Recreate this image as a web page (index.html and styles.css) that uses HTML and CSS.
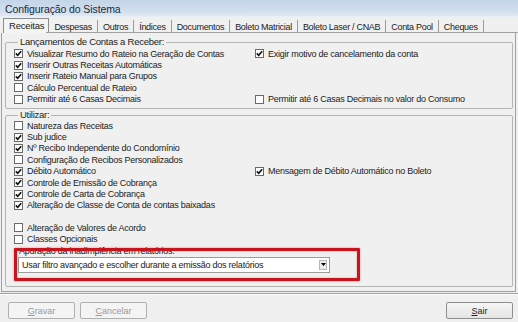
FILE: index.html
```html
<!DOCTYPE html>
<html lang="pt-BR">
<head>
    <meta charset="UTF-8">
    <title>Configuração do Sistema</title>
    <link rel="stylesheet" href="styles.css">
</head>
<body>
    <div class="window">
        <div class="titlebar">Configuração do Sistema</div>

        <div class="tabs">
            <span class="tab active">Receitas</span>
            <span class="tab">Despesas</span>
            <span class="tab">Outros</span>
            <span class="tab">Índices</span>
            <span class="tab">Documentos</span>
            <span class="tab">Boleto Matricial</span>
            <span class="tab">Boleto Laser / CNAB</span>
            <span class="tab">Conta Pool</span>
            <span class="tab">Cheques</span>
            <span class="tab-fill"></span>
        </div>

        <div class="panel">
            <fieldset class="group group-top">
                <legend>Lançamentos de Contas a Receber:</legend>
                <div class="rows">
                    <label class="check on">Visualizar Resumo do Rateio na Geração de Contas</label>
                    <label class="check on">Exigir motivo de cancelamento da conta</label>
                    <label class="check on">Inserir Outras Receitas Automáticas</label>
                    <span></span>
                    <label class="check on">Inserir Rateio Manual para Grupos</label>
                    <span></span>
                    <label class="check">Cálculo Percentual de Rateio</label>
                    <span></span>
                    <label class="check">Permitir até 6 Casas Decimais</label>
                    <label class="check">Permitir até 6 Casas Decimais no valor do Consumo</label>
                </div>
            </fieldset>

            <fieldset class="group group-use">
                <legend>Utilizar:</legend>
                <div class="rows">
                    <label class="check">Natureza das Receitas</label>
                    <span></span>
                    <label class="check on">Sub judice</label>
                    <span></span>
                    <label class="check on">Nº Recibo Independente do Condomínio</label>
                    <span></span>
                    <label class="check">Configuração de Recibos Personalizados</label>
                    <span></span>
                    <label class="check on">Débito Automático</label>
                    <label class="check on">Mensagem de Débito Automático no Boleto</label>
                    <label class="check on">Controle de Emissão de Cobrança</label>
                    <span></span>
                    <label class="check on">Controle de Carta de Cobrança</label>
                    <span></span>
                    <label class="check on">Alteração de Classe de Conta de contas baixadas</label>
                    <span></span>
                </div>
                <div class="rows rows-extra">
                    <label class="check">Alteração de Valores de Acordo</label>
                    <span></span>
                    <label class="check">Classes Opcionais</label>
                    <span></span>
                </div>

                <div class="field">
                    <div class="field-label">Apuração da inadimplência em relatórios:</div>
                    <div class="select">
                        <span class="select-text">Usar filtro avançado e escolher durante a emissão dos relatórios</span>
                        <span class="select-btn">
                            <svg width="5" height="3" viewBox="0 0 5 3"><path d="M0 0h5L2.5 3z" fill="#000"/></svg>
                        </span>
                    </div>
                    <div class="highlight"></div>
                </div>
            </fieldset>
        </div>

        <div class="footer">
            <div class="buttons">
                <button class="btn" disabled><u>G</u>ravar</button>
                <button class="btn" disabled><u>C</u>ancelar</button>
            </div>
            <button class="btn"><u>S</u>air</button>
        </div>
    </div>

    <script>
        // draw the tick inside every checked box
        document.querySelectorAll('.check').forEach(function (label) {
            const box = document.createElement('span');
            box.className = 'box';
            if (label.classList.contains('on')) {
                box.innerHTML = '<svg width="7" height="7" viewBox="0 0 7 7"><path d="M0.8 3.4 L2.7 5.3 L6.2 1.2" fill="none" stroke="#111" stroke-width="1.6"/></svg>';
            }
            label.prepend(box);
        });
    </script>
</body>
</html>
```

FILE: styles.css
```css
* {
    box-sizing: border-box;
}
body {
    margin: 0;
    font-family: "Liberation Sans", Arial, sans-serif;
    font-size: 9px;
    letter-spacing: -0.25px;
    color: #222;
    background-color: #f0f0f0;
}
.window {
    width: 518px;
    height: 322px;
    background-color: #f0f0f0;
    overflow: hidden;
}
.titlebar {
    height: 17px;
    padding: 3px 0 0 5px;
    font-size: 10.5px;
    letter-spacing: -0.1px;
    color: #1c2a3c;
    background: linear-gradient(#c4d5e9, #d2dfee 70%, #dfe8f3);
    border-bottom: 1px solid #e8eef6;
}

/* tab strip */
.tabs {
    display: flex;
    height: 16px;
    padding-left: 3px;
    align-items: stretch;
}
.tab {
    padding: 2px 5px 0;
    border-right: 1px solid #9a9a9a;
    margin: 3px 0 0;
    height: 12px;
    line-height: 10px;
    font-size: 9px;
    letter-spacing: -0.3px;
}
.tab.active {
    margin: 1px 0 0;
    height: 15px;
    padding: 2px 4px 0 5px;
    border: 1px solid #8c8c8c;
    border-bottom: none;
    background: #f4f4f4;
    font-size: 9.5px;
    letter-spacing: -0.2px;
}
.tab-fill {
    flex: 1;
    border-bottom: 1px solid #a0a0a0;
}

/* page under the tabs */
.panel {
    height: 259px;
    margin: 0 2px 0 1px;
    padding: 4px 2px 0 3px;
    border: 1px solid #a0a0a0;
    border-top: none;
    position: relative;
}
.tabs + .panel::before {
    content: "";
    position: absolute;
    top: -1px;
    left: 44px;
    right: -1px;
    border-top: 1px solid #a0a0a0;
}
.group {
    margin: 0;
    padding: 0 0 0 8px;
    border: 1px solid #b4b4b4;
    border-radius: 2px;
    min-width: 0;
}
.group legend {
    padding: 0 2px;
    margin-left: 4px;
    font-size: 9.5px;
    line-height: 10px;
}
.group-top {
    height: 72px;
}
.group-use {
    height: 177px;
    margin-top: 1px;
}
.group-use .rows {
    padding-top: 0;
}
.rows {
    display: grid;
    grid-template-columns: 241px 1fr;
    grid-auto-rows: 11.4px;
    padding-top: 1px;
}
.group-use .rows-extra {
    margin-top: 11px;
}
.check {
    display: flex;
    align-items: center;
    gap: 4px;
    white-space: nowrap;
}
.box {
    width: 9px;
    height: 9px;
    flex: none;
    border: 1px solid #6a6a6a;
    background: #fff;
    display: flex;
    align-items: center;
    justify-content: center;
}

/* drop-down inside the marked area */
.field {
    position: relative;
    margin: 1px 0 0 4px;
    width: 312px;
}
.field-label {
    padding-left: 1px;
    line-height: 10px;
}
.select {
    display: flex;
    align-items: center;
    height: 16px;
    margin-top: 1px;
    padding: 0 2px 0 3px;
    background: #fff;
    border: 1px solid #9c9c9c;
}
.select-text {
    flex: 1;
}
.select-btn {
    width: 8px;
    height: 10px;
    border: 1px solid #b8b8b8;
    background: #ececec;
    display: flex;
    align-items: center;
    justify-content: center;
}
.highlight {
    position: absolute;
    top: 2px;
    left: -4px;
    width: 346px;
    height: 33px;
    border: 3px solid #c8141c;
    border-radius: 1px;
    box-shadow: 0 0 2px rgba(160, 0, 0, 0.5), inset 0 0 2px rgba(160, 0, 0, 0.4);
}

/* bottom buttons */
.footer {
    display: flex;
    justify-content: space-between;
    margin-top: 1px;
    padding: 8px 5px 0 8px;
    border-top: 1px solid #a0a0a0;
    box-shadow: inset 0 1px 0 #fff;
}
.buttons {
    display: flex;
    gap: 5px;
}
.btn {
    width: 67px;
    height: 17px;
    padding: 0;
    font-family: inherit;
    font-size: 9px;
    color: #222;
    background: linear-gradient(#f6f6f6, #e4e4e4);
    border: 1px solid #8e8e8e;
    border-radius: 2px;
}
.btn:disabled {
    color: #9a9a9a;
    border-color: #b0b0b0;
    background: #f4f4f4;
}
```
